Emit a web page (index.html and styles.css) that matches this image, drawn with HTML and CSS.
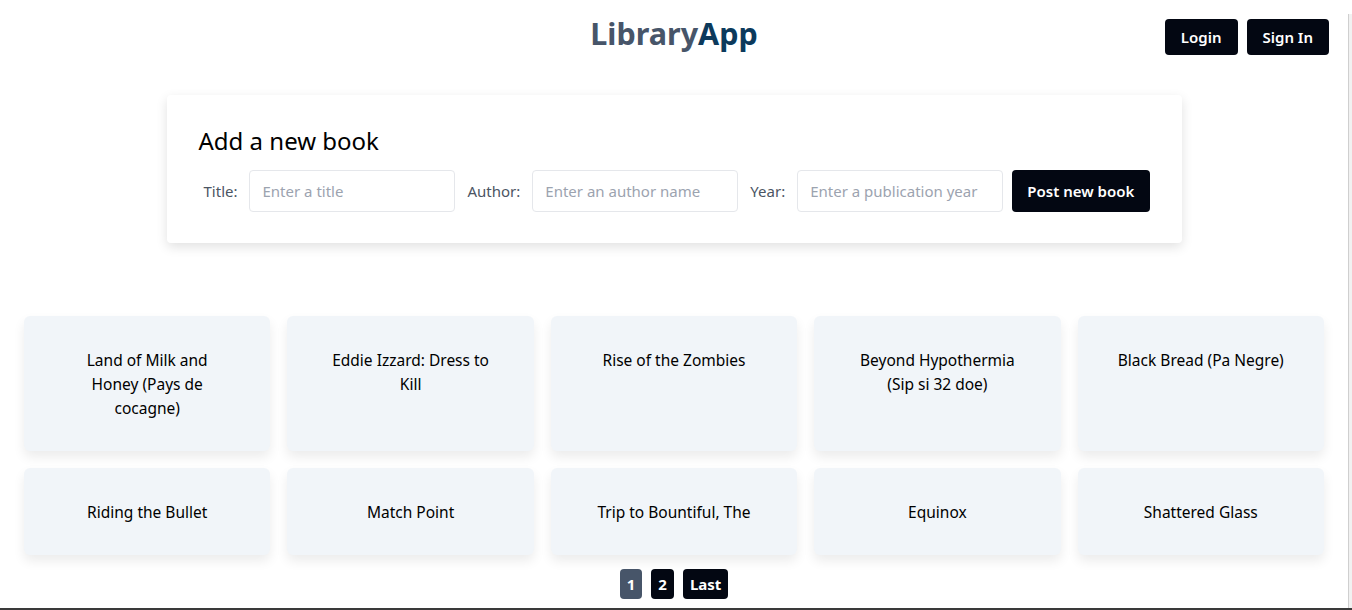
FILE: index.html
```html
<!DOCTYPE html>
<html lang="en">
<head>
<meta charset="utf-8">
<title>LibraryApp</title>
<link rel="stylesheet" href="styles.css">
</head>
<body>
<div class="page">
  <header class="header">
    <h1 class="logo"><span class="logo-a">Library</span><span class="logo-b">App</span></h1>
    <nav class="auth">
      <button class="btn">Login</button>
      <button class="btn">Sign In</button>
    </nav>
  </header>

  <section class="form-card">
    <h2 class="form-title">Add a new book</h2>
    <form class="form-row">
      <label class="label first">Title:</label>
      <input class="input" type="text" placeholder="Enter a title">
      <label class="label">Author:</label>
      <input class="input" type="text" placeholder="Enter an author name">
      <label class="label">Year:</label>
      <input class="input" type="text" placeholder="Enter a publication year">
      <button type="button" class="btn btn-post">Post new book</button>
    </form>
  </section>

  <main class="grid">
    <div class="book">Land of Milk and Honey (Pays de cocagne)</div>
    <div class="book">Eddie Izzard: Dress to Kill</div>
    <div class="book">Rise of the Zombies</div>
    <div class="book">Beyond Hypothermia (Sip si 32 doe)</div>
    <div class="book">Black Bread (Pa Negre)</div>
    <div class="book">Riding the Bullet</div>
    <div class="book">Match Point</div>
    <div class="book">Trip to Bountiful, The</div>
    <div class="book">Equinox</div>
    <div class="book">Shattered Glass</div>
  </main>

  <nav class="pager">
    <button class="pg active">1</button>
    <button class="pg">2</button>
    <button class="pg">Last</button>
  </nav>
</div>
<div class="scroll-strip"></div>
<div class="bottom-line"></div>
</body>
</html>
```

FILE: styles.css
```css
* { box-sizing: border-box; }
html, body { margin: 0; padding: 0; background: #fff; }
body {
  font-family: "Noto Sans", "Open Sans", sans-serif;
  font-size: 16px;
  color: #000;
  overflow: hidden;
  height: 610px;
}
.page { margin-right: 4px; }

.header {
  height: 75px;
  display: flex;
  align-items: center;
  justify-content: center;
  position: relative;
}
.logo {
  margin: 0;
  font-size: 30.5px;
  font-weight: 700;
  line-height: 36px;
  margin-top: -9px;
}
.logo-a { color: #475569; }
.logo-b { color: #0c3a5c; }
.auth {
  position: absolute;
  right: 19px;
  top: 19px;
  display: flex;
  gap: 9px;
}
.btn {
  font-family: inherit;
  font-size: 15px;
  font-weight: 600;
  color: #fff;
  background: #030712;
  border: 0;
  border-radius: 4px;
  height: 36px;
  padding: 0 16px;
}

.form-card {
  width: 1015px;
  margin: 20px auto 0;
  padding: 30px 32px 31px;
  background: #fff;
  border-radius: 4px;
  box-shadow: 0 4px 12px rgba(0,0,0,0.12);
}
.form-title {
  margin: 0 0 13px;
  font-size: 24px;
  font-weight: 400;
  line-height: 32px;
}
.form-row {
  display: flex;
  align-items: center;
}
.label {
  color: #4b5563;
  font-size: 15px;
  margin: 0 12px 0 12px;
}
.label.first { margin-left: 5px; }
.input {
  width: 206px;
  height: 42px;
  border: 1px solid #e5e7eb;
  border-radius: 4px;
  padding: 0 12px;
  font-family: inherit;
  font-size: 15px;
  color: #111;
  outline: none;
}
.input::placeholder { color: #9ca3af; }
.btn-post {
  height: 42px;
  margin-left: 9px;
  width: 138px;
  padding: 0;
}

.grid {
  margin-top: 73px;
  padding: 0 24px;
  display: grid;
  grid-template-columns: repeat(5, 1fr);
  gap: 17px;
}
.book {
  background: #f1f5f9;
  border-radius: 6px;
  box-shadow: 0 6px 12px rgba(0,0,0,0.08);
  padding: 32px 39px 31px;
  text-align: center;
  font-size: 15.5px;
  line-height: 24px;
}

.pager {
  display: flex;
  justify-content: center;
  gap: 9px;
  margin-top: 14px;
}
.pg {
  font-family: inherit;
  font-size: 15px;
  font-weight: 700;
  color: #fff;
  background: #030712;
  border: 0;
  border-radius: 4px;
  height: 30px;
  padding: 0 7px;
}
.pg.active { background: #475569; }

.scroll-strip {
  position: fixed;
  top: 14px;
  right: 0;
  width: 4px;
  bottom: 2px;
  background: #f1f1f1;
  border-left: 1px solid #cfcfcf;
}
.bottom-line {
  position: fixed;
  left: 0;
  right: 0;
  bottom: 0;
  height: 2px;
  background: #3a3a3a;
}
```
